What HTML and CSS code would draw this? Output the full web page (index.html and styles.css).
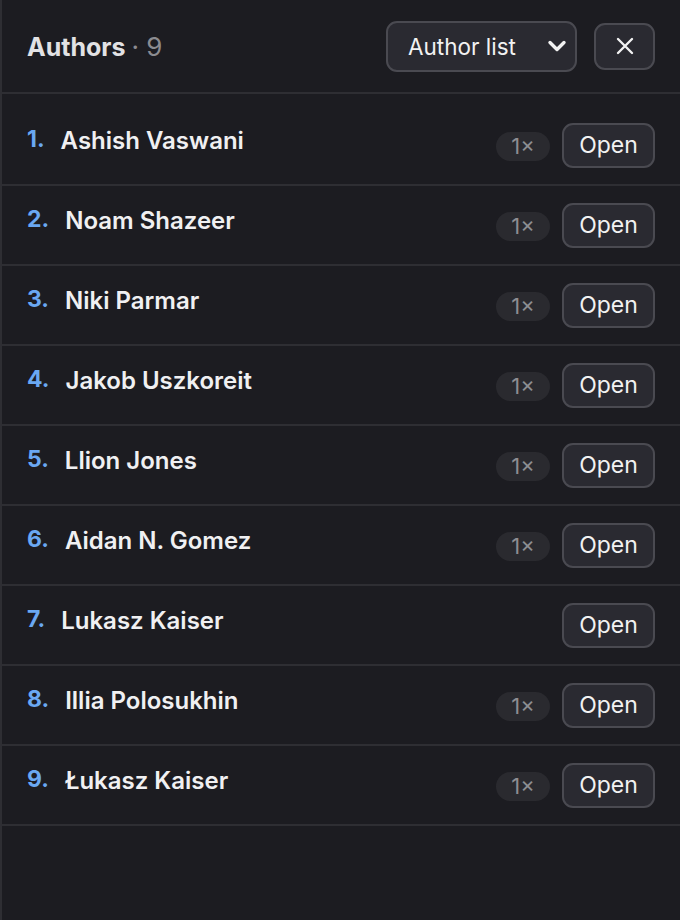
FILE: index.html
```html
<!DOCTYPE html>
<html lang="en">

<head>
  <meta charset="UTF-8">
  <meta name="viewport" content="width=device-width, initial-scale=1.0">
  <title>Authors</title>
  <link rel="stylesheet" href="styles.css">
</head>

<body>
  <div class="panel">
    <header class="panelHead">
      <h1 class="title">Authors <span class="count">· 9</span></h1>
      <div class="headTools">
        <div class="selectBox">
          <span>Author list</span>
          <svg width="20" height="14" viewBox="0 0 20 14">
            <path d="M3 3.5 L10 10.5 L17 3.5" fill="none" stroke="#f2f2f2" stroke-width="3.4" stroke-linecap="round" stroke-linejoin="round" />
          </svg>
        </div>
        <button class="closeBtn" aria-label="close">
          <svg width="18" height="18" viewBox="0 0 18 18">
            <path d="M2 2 L16 16 M16 2 L2 16" stroke="#f2f2f2" stroke-width="2.4" stroke-linecap="round" />
          </svg>
        </button>
      </div>
    </header>

    <ul class="authorList">
      <li class="authorRow">
        <p class="authorName"><span class="num">1.</span>Ashish Vaswani</p>
        <div class="rowTools"><span class="pill">1×</span><button class="openBtn">Open</button></div>
      </li>
      <li class="authorRow">
        <p class="authorName"><span class="num">2.</span>Noam Shazeer</p>
        <div class="rowTools"><span class="pill">1×</span><button class="openBtn">Open</button></div>
      </li>
      <li class="authorRow">
        <p class="authorName"><span class="num">3.</span>Niki Parmar</p>
        <div class="rowTools"><span class="pill">1×</span><button class="openBtn">Open</button></div>
      </li>
      <li class="authorRow">
        <p class="authorName"><span class="num">4.</span>Jakob Uszkoreit</p>
        <div class="rowTools"><span class="pill">1×</span><button class="openBtn">Open</button></div>
      </li>
      <li class="authorRow">
        <p class="authorName"><span class="num">5.</span>Llion Jones</p>
        <div class="rowTools"><span class="pill">1×</span><button class="openBtn">Open</button></div>
      </li>
      <li class="authorRow">
        <p class="authorName"><span class="num">6.</span>Aidan N. Gomez</p>
        <div class="rowTools"><span class="pill">1×</span><button class="openBtn">Open</button></div>
      </li>
      <li class="authorRow">
        <p class="authorName"><span class="num">7.</span>Lukasz Kaiser</p>
        <div class="rowTools"><button class="openBtn">Open</button></div>
      </li>
      <li class="authorRow">
        <p class="authorName"><span class="num">8.</span>Illia Polosukhin</p>
        <div class="rowTools"><span class="pill">1×</span><button class="openBtn">Open</button></div>
      </li>
      <li class="authorRow">
        <p class="authorName"><span class="num">9.</span>Łukasz Kaiser</p>
        <div class="rowTools"><span class="pill">1×</span><button class="openBtn">Open</button></div>
      </li>
    </ul>
  </div>
</body>

</html>
```

FILE: styles.css
```css
body {
  margin: 0;
  background-color: #1c1c21;
  font-family: Inter, "Noto Sans", sans-serif;
  color: #f0f0f2;
}

.panel {
  min-height: 920px;
  border-left: 2px solid #2e2e33;
  box-sizing: border-box;
}

.panelHead {
  display: flex;
  align-items: center;
  justify-content: space-between;
  height: 92px;
  padding: 0 25px 0 25px;
  border-bottom: 2px solid #2e2e33;
}

.title {
  margin: 0;
  font-size: 25px;
  font-weight: 700;
  color: #e2e2e4;
}

.count {
  font-size: 26px;
  font-weight: 400;
  color: #8b8b90;
}

.headTools {
  display: flex;
  align-items: center;
  gap: 17px;
}

.selectBox {
  display: flex;
  align-items: center;
  justify-content: space-between;
  width: 191px;
  height: 51px;
  padding: 0 8px 0 20px;
  box-sizing: border-box;
  border: 2px solid #4a4a51;
  border-radius: 11px;
  background-color: #2a2a31;
  font-size: 22.5px;
  color: #f2f2f2;
}

.closeBtn {
  display: flex;
  align-items: center;
  justify-content: center;
  width: 61px;
  height: 47px;
  padding: 0;
  border: 2px solid #4a4a51;
  border-radius: 11px;
  background-color: #2a2a31;
}

.authorList {
  list-style: none;
  margin: 0;
  padding: 12px 0 0 0;
}

.authorRow {
  display: flex;
  align-items: center;
  justify-content: space-between;
  height: 78px;
  padding: 0 25px 0 25px;
  border-bottom: 2px solid #2e2e33;
}

.authorName {
  margin: 0 0 10px 0;
  font-size: 24px;
  font-weight: 600;
  line-height: 30px;
  color: #f0f0f2;
}

.num {
  margin-right: 16px;
  font-size: 23px;
  font-weight: 700;
  vertical-align: 2px;
  color: #6aa8f2;
}

.rowTools {
  display: flex;
  align-items: center;
  gap: 12px;
}

.pill {
  display: flex;
  align-items: center;
  justify-content: center;
  width: 54px;
  height: 29px;
  margin-top: 2px;
  border-radius: 15px;
  background-color: #2a2a2f;
  font-size: 22px;
  color: #8d8d92;
}

.openBtn {
  width: 93px;
  height: 45px;
  padding: 0;
  border: 2px solid #4a4a51;
  border-radius: 11px;
  background-color: #2a2a31;
  font-family: Inter, "Noto Sans", sans-serif;
  font-size: 23px;
  color: #f2f2f2;
}
```
